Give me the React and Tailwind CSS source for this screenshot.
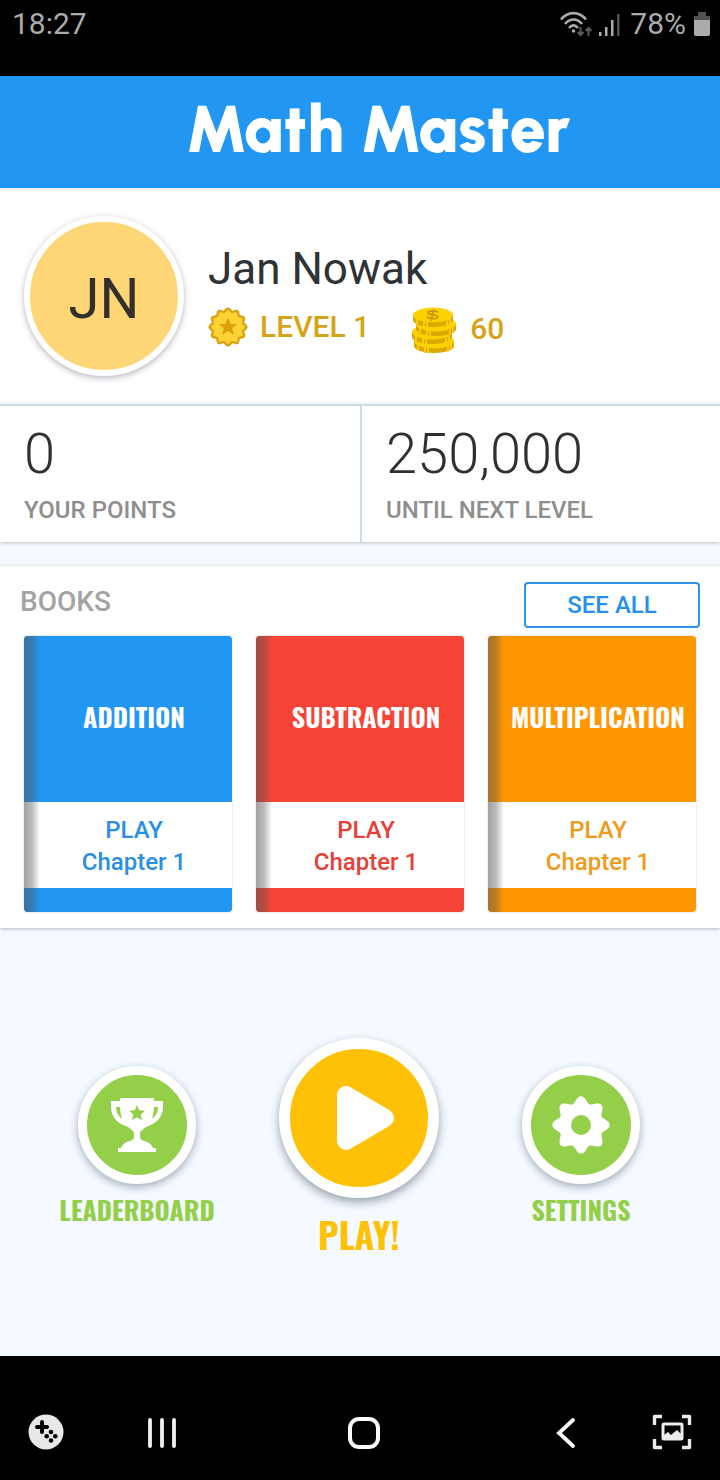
const DISPLAY_FONT = "font-['Oswald','Liberation_Sans_Narrow','Arial_Narrow',sans-serif]";

const books = [
  { id: 'addition', title: 'ADDITION', chapter: 'Chapter 1', bg: 'bg-[#2196f3]', text: 'text-[#2a8fe4]' },
  { id: 'subtraction', title: 'SUBTRACTION', chapter: 'Chapter 1', bg: 'bg-[#f64337]', text: 'text-[#e5403a]' },
  { id: 'multiplication', title: 'MULTIPLICATION', chapter: 'Chapter 1', bg: 'bg-[#ff9800]', text: 'text-[#f09a17]' },
];

// closed outline whose radius swings around r, one swing per tooth
function wavyCircle(teeth, r, depth) {
  const points = [];
  for (let i = 0; i < 240; i++) {
    const t = (i / 240) * Math.PI * 2;
    const radius = r + depth * Math.cos(teeth * t);
    points.push(`${(radius * Math.sin(t)).toFixed(2)} ${(-radius * Math.cos(t)).toFixed(2)}`);
  }
  return `M${points.join('L')}Z`;
}

function StatusBar() {
  return (
    <div className="flex h-[76px] items-start justify-between bg-black pl-3 pr-2.5 pt-2 text-3xl leading-8 text-[#ababab]">
      <span>18:27</span>
      <div className="flex items-center gap-2">
        <svg className="h-8 w-8" viewBox="0 0 32 32" fill="none" stroke="#ababab" strokeWidth="2.6">
          <path d="M1 11.500C8 3 19 3 26 11.500" />
          <path d="M5 16C10 10 17 10 22 16" />
          <path d="M9 20C12 16.500 15 16.500 18 20" />
          <circle cx="13.500" cy="23" r="1.800" fill="#ababab" stroke="none" />
          <path d="M20.500 19v8M17.500 24l3 3 3-3M28.500 28v-8M25.500 23l3-3 3 3" stroke="#5c5c5c" strokeWidth="2" />
        </svg>
        <svg className="-ml-0.5 h-8 w-6" viewBox="0 0 24 32">
          <path d="M1 24h2.500v4H1zM7 19h2.500v9H7zM13 12h2.500v16H13z" fill="#ababab" />
          <path d="M19 6h2.500v22H19z" fill="#505050" />
        </svg>
        <span>78%</span>
        <svg className="h-8 w-4" viewBox="0 0 16 32">
          <path d="M4 4h8v4h4v6H0V8h4z" fill="#505050" />
          <path d="M0 12h16v14a2 2 0 0 1-2 2H2a2 2 0 0 1-2-2z" fill="#ababab" />
        </svg>
      </div>
    </div>
  );
}

function LevelBadge() {
  return (
    <svg className="size-10" viewBox="-20 -20 40 40">
      <path d={wavyCircle(12, 17, 1.3)} fill="#fdd232" stroke="#d9a413" strokeWidth="2.4" />
      <path
        d="M0-9.500L2.600-3H9.200L4 1.200 6 8 0 4-6 8-4 1.200-9.200-3H-2.600Z"
        fill="#d9a009"
      />
    </svg>
  );
}

const coins = [
  { x: 24, y: 37 },
  { x: 22, y: 28 },
  { x: 26, y: 20 },
  { x: 23, y: 11 },
];

function Coins() {
  return (
    <svg className="h-12 w-12" viewBox="0 0 48 48">
      {coins.map(({ x, y }) => (
        <g key={y} transform={`translate(${x} ${y})`}>
          <path d="M-20-1v5c0 4 9 7 20 7s20-3 20-7v-5z" fill="#dba800" />
          <path d="M-16 3.500v5M-6 5.500v6M-9 5v6M14 4.500v5M17 3v5" stroke="#f9cb0b" strokeWidth="2" />
          <ellipse cy="-1" rx="20" ry="7.500" fill="#fdd100" />
        </g>
      ))}
      <path
        d="M28 7.500c-1-2-10-2.500-10 .3 0 3 9.500 1.200 9.500 4 0 2.800-9 2.200-10.500 0M24 4l-3 12"
        fill="none"
        stroke="#c89a08"
        strokeWidth="1.800"
      />
    </svg>
  );
}

function Profile() {
  return (
    <section className="flex items-center gap-6 bg-white px-6 pb-7 pt-7">
      <div className="flex size-40 shrink-0 items-center justify-center rounded-full border-6 border-white bg-[#fed676] text-[56px] leading-none text-[#33302b] shadow-[0_2px_6px_rgba(40,50,70,0.35)]">
        <span className="pt-1.5">JN</span>
      </div>
      <div className="pt-0.5">
        <h2 className="text-[44px] leading-14 text-[#303234]">Jan Nowak</h2>
        <div className="mt-1 flex items-center text-3xl font-medium leading-10 text-[#d4a418]">
          <LevelBadge />
          <span className="ml-3">LEVEL 1</span>
          <span className="ml-10 flex items-center gap-3 pt-1">
            <Coins />
            60
          </span>
        </div>
      </div>
    </section>
  );
}

function Stat({ value, label }) {
  return (
    <div className="px-6 pb-4 pt-4">
      <p className="text-[56px] font-light leading-16 text-[#303030]">{value}</p>
      <p className="pt-2 text-2xl font-medium leading-8 text-[#8e8e8e]">{label}</p>
    </div>
  );
}

function Book({ book }) {
  return (
    <button
      type="button"
      className={`relative flex flex-col overflow-hidden rounded-sm shadow-[0_0_2px_rgba(0,0,0,0.25)] ${book.bg}`}
    >
      <span
        className={`flex h-[166px] w-full items-center justify-center pb-1.5 pl-3 text-[26px] font-bold text-white ${DISPLAY_FONT}`}
      >
        {book.title}
      </span>
      <span className={`mb-6 flex h-[86px] w-full flex-col bg-white pl-3 pt-3 text-2xl font-medium leading-8 ${book.text}`}>
        <span>PLAY</span>
        <span>{book.chapter}</span>
      </span>
      <span className="absolute inset-y-0 left-0 w-4 bg-linear-to-r from-[#555]/55 via-[#555]/40 to-transparent"></span>
    </button>
  );
}

function TrophyIcon() {
  return (
    <svg className="h-14 w-14" viewBox="0 0 56 56">
      <path
        fill="#fff"
        fillRule="evenodd"
        d="M11 1h34v3h9v5c0 11-6 17-15 20-5 3-8 5-8 7v3c0 3 1 4 4 5 5 1 8 4 9 7h3v4H9v-4h3c1-3 4-6 9-7 3-1 4-2 4-5v-3c0-2-3-4-8-7C8 26 2 20 2 9V4h9zM7 10c0 5 2 9 6 12-1-4-2-8-2-12zM49 10h-4c0 4-1 8-2 12 4-3 6-7 6-12z"
      />
      <path d="M28 8l2.300 5.200 5.700.6-4.300 3.800 1.300 5.700-5-3-5 3 1.300-5.700-4.300-3.800 5.700-.6z" fill="#94cf4a" />
    </svg>
  );
}

function GearIcon() {
  return (
    <svg className="h-15 w-15" viewBox="-30 -30 60 60">
      <path d={`${wavyCircle(8, 25.5, 3.2)}M10 0A10 10 0 1 0-10 0A10 10 0 1 0 10 0Z`} fill="#fff" fillRule="evenodd" />
    </svg>
  );
}

function RoundAction({ label, children }) {
  return (
    <button type="button" className="flex flex-col items-center gap-2.5 pt-7 text-[#94cf4a]">
      <span className="flex size-[118px] items-center justify-center rounded-full border-9 border-white bg-[#94cf4a] shadow-[0_3px_8px_rgba(40,50,80,0.4)]">
        {children}
      </span>
      <span className={`text-[26px] font-bold leading-8 ${DISPLAY_FONT}`}>{label}</span>
    </button>
  );
}

function NavBar() {
  return (
    <nav className="flex h-[124px] items-center bg-black px-7 pt-7">
      <button type="button" aria-label="Game tools">
        <svg className="size-9" viewBox="0 0 36 36">
          <circle cx="18" cy="18" r="17.500" fill="#e8e8e8" />
          <path d="M14 8v10M9 13h10" stroke="#000" strokeWidth="4" strokeLinecap="round" />
          <circle cx="23" cy="18" r="2.300" />
          <circle cx="23" cy="26.500" r="2.300" />
          <circle cx="18.700" cy="22.200" r="2.300" />
          <circle cx="27.300" cy="22.200" r="2.300" />
        </svg>
      </button>
      <div className="ml-20 mr-17 flex flex-1 items-center justify-between">
        <button type="button" aria-label="Recent apps">
          <svg className="size-9" viewBox="0 0 36 36" stroke="#f0f0f0" strokeWidth="3.800" strokeLinecap="round">
            <path d="M6 6v26M18 6v26M30 6v26" />
          </svg>
        </button>
        <button type="button" aria-label="Home">
          <svg className="size-9" viewBox="0 0 36 36">
            <rect x="4" y="5" width="28" height="28" rx="9" fill="none" stroke="#fafafa" strokeWidth="4" />
          </svg>
        </button>
        <button type="button" aria-label="Back">
          <svg className="size-9" viewBox="0 0 36 36">
            <path d="M25 6L11 19l14 13" fill="none" stroke="#fafafa" strokeWidth="3.800" strokeLinecap="round" />
          </svg>
        </button>
      </div>
      <button type="button" aria-label="Screenshot">
        <svg className="h-9 w-10" viewBox="0 0 40 36" fill="none" stroke="#ececec" strokeWidth="3.400">
          <path d="M10 2.500H2.500V11M30 2.500h7.500V11M10 33.500H2.500V25M30 33.500h7.500V25" strokeLinejoin="round" />
          <rect x="11" y="10" width="19" height="15" rx="1" strokeWidth="3" />
          <path d="M12 24v-3l4-3 3 3 6-5 4 4v4z" fill="#ececec" stroke="none" />
        </svg>
      </button>
    </nav>
  );
}

function App() {
  return (
    <div className="flex min-h-screen flex-col bg-[#f4faff] font-['Roboto',sans-serif]">
      <StatusBar />

      <header className="relative flex h-28 items-center justify-center bg-[#2196f3] pb-1.5 pl-9 shadow-[0_1px_4px_rgba(0,0,0,0.12)]">
        <h1 className="font-['Urbanist','Lato',sans-serif] text-[65px] font-black leading-none text-white">
          Math Master
        </h1>
      </header>

      <main className="flex flex-1 flex-col">
        <Profile />

        <section className="grid grid-cols-2 border-t-2 border-[#cddde8] bg-white shadow-[0_1px_4px_rgba(0,0,0,0.22)]">
          <Stat value="0" label="YOUR POINTS" />
          <div className="border-l-2 border-[#cddde8]">
            <Stat value="250,000" label="UNTIL NEXT LEVEL" />
          </div>
        </section>

        <section className="mt-6 bg-white pb-4 pt-4 shadow-[0_1px_4px_rgba(0,0,0,0.25)]">
          <div className="flex items-start justify-between px-5">
            <h3 className="pt-1 text-[28px] font-medium leading-8 text-[#a3a3a3]">BOOKS</h3>
            <button
              type="button"
              className="h-[46px] w-44 rounded border-2 border-[#2c93e6] text-2xl font-medium text-[#2490ee]"
            >
              SEE ALL
            </button>
          </div>
          <div className="mt-2 grid grid-cols-3 gap-6 px-6">
            {books.map((book) => (
              <Book key={book.id} book={book} />
            ))}
          </div>
        </section>

        <section className="grid flex-1 grid-cols-3 content-center items-start pl-6.5 pr-7 pt-2">
          <RoundAction label="LEADERBOARD">
            <TrophyIcon />
          </RoundAction>
          <button type="button" className="flex flex-col items-center gap-4 text-[#ffc107]">
            <span className="flex size-40 items-center justify-center rounded-full border-11 border-white bg-[#ffc107] shadow-[0_4px_10px_rgba(40,50,70,0.45)]">
              <svg className="ml-5 size-18" viewBox="0 0 72 72">
                <path d="M13 13v46L52 36z" fill="#fff" stroke="#fff" strokeWidth="18" strokeLinejoin="round" />
              </svg>
            </span>
            <span className={`text-4xl font-bold leading-10 ${DISPLAY_FONT}`}>PLAY!</span>
          </button>
          <RoundAction label="SETTINGS">
            <GearIcon />
          </RoundAction>
        </section>
      </main>

      <NavBar />
    </div>
  );
}

export default App;
